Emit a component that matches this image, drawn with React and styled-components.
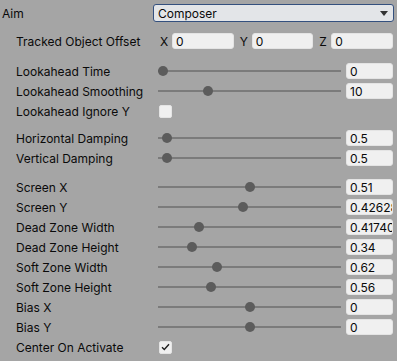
import React from 'react'
import styled, {createGlobalStyle} from 'styled-components'

const GlobalStyle = createGlobalStyle`
    html, body {
        margin: 0;
        padding: 0;
        background: #a5a5a5;
    }
    body {
        font-family: Inter, "Liberation Sans", sans-serif;
        font-size: 12px;
        color: #0a0a0a;
    }
`;

const Inspector = styled.div`
    width: 397px;
    height: 361px;
    box-sizing: border-box;
    padding: 3px 3px 0 2px;
    background: #a5a5a5;
`;

const Row = styled.div`
    display: grid;
    grid-template-columns: 151px 1fr;
    align-items: center;
    height: 20px;
    margin-top: ${p => p.gap || 0}px;
`;

const Label = styled.div`
    padding-left: ${p => (p.indent ? 14 : 0)}px;
    white-space: nowrap;
`;

const Dropdown = styled.div`
    display: flex;
    align-items: center;
    justify-content: space-between;
    height: 18px;
    box-sizing: border-box;
    padding: 0 5px 0 4px;
    background: #e3e5e8;
    border: 1px solid #34507e;
    border-radius: 3px;
`;

const Arrow = styled.span`
    width: 0;
    height: 0;
    border-left: 4px solid transparent;
    border-right: 4px solid transparent;
    border-top: 5px solid #333;
`;

const Vector = styled.div`
    display: grid;
    grid-template-columns: repeat(3, 1fr);
    gap: 6px;
    margin: 0 1px 0 7px;
`;

const Axis = styled.div`
    display: flex;
    align-items: center;
`;

const AxisName = styled.span`
    width: 12px;
    flex: none;
`;

const Field = styled.div`
    height: 16px;
    box-sizing: border-box;
    padding: 0 3px;
    line-height: 15px;
    background: #f0f0f0;
    border: 1px solid #e4e4e4;
    border-radius: 3px;
    overflow: hidden;
    white-space: nowrap;
    flex: ${p => (p.grow ? 1 : 'none')};
    width: ${p => (p.grow ? 'auto' : '47px')};
`;

const SliderBox = styled.div`
    display: flex;
    align-items: center;
    margin-right: 1px;
`;

const Slider = styled.div`
    position: relative;
    flex: 1;
    height: 20px;
    margin: 0 5px;
    &::before {
        content: '';
        position: absolute;
        left: 0;
        right: 0;
        top: 9px;
        height: 2px;
        background: #7b7b7b;
    }
`;

const Thumb = styled.span`
    position: absolute;
    top: 5px;
    width: 10px;
    height: 10px;
    margin-left: -5px;
    border-radius: 50%;
    background: #5c5c5c;
`;

const Check = styled.div`
    width: 13px;
    height: 13px;
    margin-left: 6px;
    box-sizing: border-box;
    background: #f0f0f0;
    border: 1px solid #e4e4e4;
    border-radius: 2px;
    display: flex;
    align-items: center;
    justify-content: center;
`;

const sliders = [
    {label: 'Lookahead Time', value: '0', min: 0, max: 1, v: 0, gap: 10},
    {label: 'Lookahead Smoothing', value: '10', min: 3, max: 30, v: 10},
]

const damping = [
    {label: 'Horizontal Damping', value: '0.5', min: 0, max: 20, v: 0.5, gap: 7},
    {label: 'Vertical Damping', value: '0.5', min: 0, max: 20, v: 0.5},
]

const screen = [
    {label: 'Screen X', value: '0.51', min: -0.5, max: 1.5, v: 0.51, gap: 9},
    {label: 'Screen Y', value: '0.42628', min: -0.5, max: 1.5, v: 0.42628},
    {label: 'Dead Zone Width', value: '0.41740', min: 0, max: 2, v: 0.4174},
    {label: 'Dead Zone Height', value: '0.34', min: 0, max: 2, v: 0.34},
    {label: 'Soft Zone Width', value: '0.62', min: 0, max: 2, v: 0.62},
    {label: 'Soft Zone Height', value: '0.56', min: 0, max: 2, v: 0.56},
    {label: 'Bias X', value: '0', min: -0.5, max: 0.5, v: 0},
    {label: 'Bias Y', value: '0', min: -0.5, max: 0.5, v: 0},
]

function SliderRow({label, value, min, max, v, gap}) {
    const t = (v - min) / (max - min)
    return (
        <Row gap={gap}>
            <Label indent>{label}</Label>
            <SliderBox>
                <Slider>
                    <Thumb style={{left: `calc(5px + ${t} * (100% - 10px))`}} />
                </Slider>
                <Field>{value}</Field>
            </SliderBox>
        </Row>
    )
}

function Checkbox({checked}) {
    return (
        <Check>
            {checked && (
                <svg width="9" height="8" viewBox="0 0 9 8">
                    <path d="M1 4.2 L3.3 6.4 L8 1.2" fill="none" stroke="#1e1e1e" strokeWidth="1.4" />
                </svg>
            )}
        </Check>
    )
}

export default function App() {
    return (
        <Inspector>
            <GlobalStyle />
            <Row>
                <Label>Aim</Label>
                <Dropdown>
                    <span>Composer</span>
                    <Arrow />
                </Dropdown>
            </Row>
            <Row gap={8}>
                <Label indent>Tracked Object Offset</Label>
                <Vector>
                    {['X', 'Y', 'Z'].map(a => (
                        <Axis key={a}>
                            <AxisName>{a}</AxisName>
                            <Field grow>0</Field>
                        </Axis>
                    ))}
                </Vector>
            </Row>
            {sliders.map(s => <SliderRow key={s.label} {...s} />)}
            <Row>
                <Label indent>Lookahead Ignore Y</Label>
                <Checkbox />
            </Row>
            {damping.map(s => <SliderRow key={s.label} {...s} />)}
            {screen.map(s => <SliderRow key={s.label} {...s} />)}
            <Row>
                <Label indent>Center On Activate</Label>
                <Checkbox checked />
            </Row>
        </Inspector>
    )
}
